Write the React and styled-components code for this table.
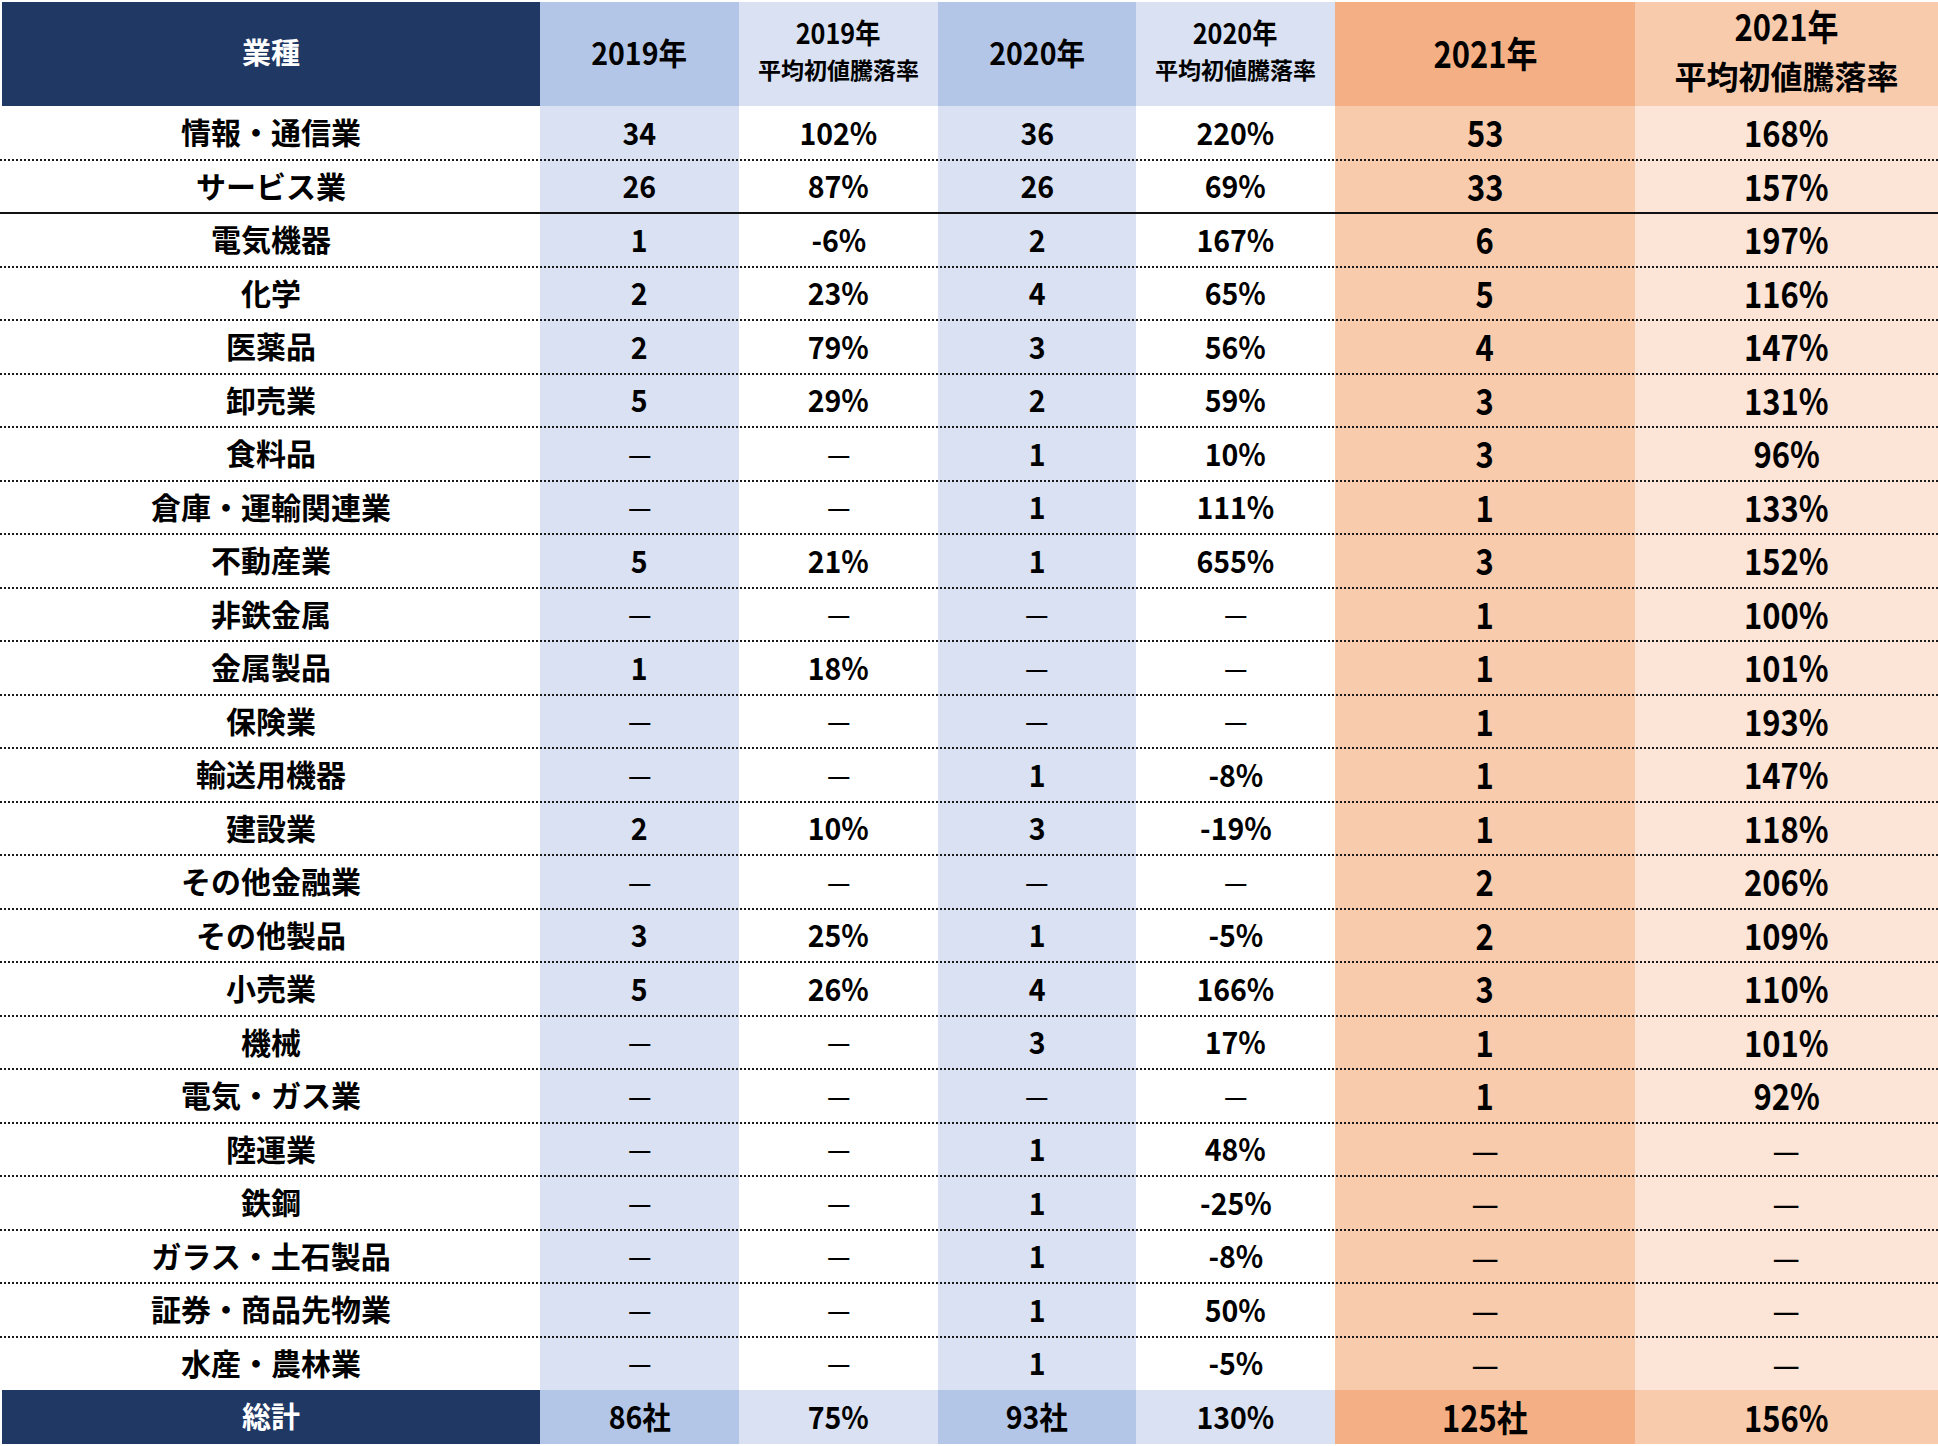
import styled, { createGlobalStyle } from "styled-components";

const GlobalStyle = createGlobalStyle`
  html, body {
    margin: 0;
    padding: 0;
    background: #fff;
  }
  body {
    font-family: "Noto Sans CJK JP", "Noto Sans", sans-serif;
    color: #000;
  }
`;

const COLS = "538px 199px 199px 198px 199px 300px 303px";

const colors = {
  navy: "#203864",
  blue: "#b4c6e7",
  paleBlue: "#d9e1f2",
  white: "#ffffff",
  orange: "#f4b084",
  peach: "#f8cbad",
  palePeach: "#fce4d6",
};

// background per column: header / body (total row reuses header colours)
const headBg = [colors.navy, colors.blue, colors.paleBlue, colors.blue, colors.paleBlue, colors.orange, colors.peach];
const bodyBg = [colors.white, colors.paleBlue, colors.white, colors.paleBlue, colors.white, colors.peach, colors.palePeach];

const Sheet = styled.div`
  padding: 2px 0 0 2px;
  width: 1936px;
`;

const Row = styled.div`
  display: grid;
  grid-template-columns: ${COLS};
  height: ${(p) => p.$h}px;
  position: relative;

  &::after {
    content: "";
    display: ${(p) => (p.$line ? "block" : "none")};
    position: absolute;
    left: -2px;
    right: 0;
    bottom: -1px;
    height: 0;
    border-top: ${(p) =>
      p.$line === "solid" ? "2px solid #111" : "2px dotted #1a1a1a"};
    z-index: 1;
  }
`;

const Cell = styled.div`
  display: flex;
  align-items: center;
  justify-content: center;
  background: ${(p) => p.$bg};
  font-weight: 700;
  font-size: ${(p) => p.$size || 30}px;
  line-height: 1;
  color: ${(p) => (p.$light ? "#fff" : "#000")};
  white-space: nowrap;
  padding-bottom: 3px;
  box-sizing: border-box;
`;

const HeadCell = styled(Cell)`
  flex-direction: column;
  line-height: 1.3;
  text-align: center;
  padding-bottom: 4px;
`;

const HeadLine = styled.span`
  display: block;
  font-size: ${(p) => p.$size}px;
  transform: scaleX(${(p) => p.$sx || 1});
  margin: ${(p) => p.$gap || 0}px 0;
`;

const Val = styled.span`
  display: inline-block;
  transform: scaleX(${(p) => p.$sx});
`;

const Dash = styled.span`
  display: inline-block;
  font-weight: 400;
  transform: scaleX(0.85);
`;

const D = "—";

const rows = [
  ["情報・通信業", "34", "102%", "36", "220%", "53", "168%"],
  ["サービス業", "26", "87%", "26", "69%", "33", "157%"],
  ["電気機器", "1", "-6%", "2", "167%", "6", "197%"],
  ["化学", "2", "23%", "4", "65%", "5", "116%"],
  ["医薬品", "2", "79%", "3", "56%", "4", "147%"],
  ["卸売業", "5", "29%", "2", "59%", "3", "131%"],
  ["食料品", D, D, "1", "10%", "3", "96%"],
  ["倉庫・運輸関連業", D, D, "1", "111%", "1", "133%"],
  ["不動産業", "5", "21%", "1", "655%", "3", "152%"],
  ["非鉄金属", D, D, D, D, "1", "100%"],
  ["金属製品", "1", "18%", D, D, "1", "101%"],
  ["保険業", D, D, D, D, "1", "193%"],
  ["輸送用機器", D, D, "1", "-8%", "1", "147%"],
  ["建設業", "2", "10%", "3", "-19%", "1", "118%"],
  ["その他金融業", D, D, D, D, "2", "206%"],
  ["その他製品", "3", "25%", "1", "-5%", "2", "109%"],
  ["小売業", "5", "26%", "4", "166%", "3", "110%"],
  ["機械", D, D, "3", "17%", "1", "101%"],
  ["電気・ガス業", D, D, D, D, "1", "92%"],
  ["陸運業", D, D, "1", "48%", D, D],
  ["鉄鋼", D, D, "1", "-25%", D, D],
  ["ガラス・土石製品", D, D, "1", "-8%", D, D],
  ["証券・商品先物業", D, D, "1", "50%", D, D],
  ["水産・農林業", D, D, "1", "-5%", D, D],
];

const total = ["総計", "86社", "75%", "93社", "130%", "125社", "156%"];

const valSize = (i) => (i >= 5 ? 36 : 31);
const valScale = (i) => (i >= 5 ? 0.86 : 0.92);

const App = () => {
  return (
    <>
      <GlobalStyle />
      <Sheet>
        <Row $h={104}>
          <HeadCell $bg={headBg[0]} $light $size={29}>
            業種
          </HeadCell>
          <HeadCell $bg={headBg[1]}>
            <HeadLine $size={31} $sx={0.92}>2019年</HeadLine>
          </HeadCell>
          <HeadCell $bg={headBg[2]}>
            <HeadLine $size={28} $sx={0.9}>2019年</HeadLine>
            <HeadLine $size={23} $gap={5}>平均初値騰落率</HeadLine>
          </HeadCell>
          <HeadCell $bg={headBg[3]}>
            <HeadLine $size={31} $sx={0.92}>2020年</HeadLine>
          </HeadCell>
          <HeadCell $bg={headBg[4]}>
            <HeadLine $size={28} $sx={0.9}>2020年</HeadLine>
            <HeadLine $size={23} $gap={5}>平均初値騰落率</HeadLine>
          </HeadCell>
          <HeadCell $bg={headBg[5]}>
            <HeadLine $size={36} $sx={0.86}>2021年</HeadLine>
          </HeadCell>
          <HeadCell $bg={headBg[6]}>
            <HeadLine $size={36} $sx={0.86}>2021年</HeadLine>
            <HeadLine $size={32} $gap={6}>平均初値騰落率</HeadLine>
          </HeadCell>
        </Row>

        {rows.map((r, ri) => {
          const line = ri === 1 ? "solid" : ri === rows.length - 1 ? null : "dotted";
          return (
            <Row key={r[0]} $h={53.5} $line={line}>
              {r.map((v, i) =>
                i === 0 ? (
                  <Cell key={i} $bg={bodyBg[0]} $size={30}>
                    {v}
                  </Cell>
                ) : (
                  <Cell key={i} $bg={bodyBg[i]} $size={valSize(i)}>
                    {v === D ? <Dash>{D}</Dash> : <Val $sx={valScale(i)}>{v}</Val>}
                  </Cell>
                )
              )}
            </Row>
          );
        })}

        <Row $h={54}>
          {total.map((v, i) =>
            i === 0 ? (
              <Cell key={i} $bg={headBg[0]} $light $size={29}>
                {v}
              </Cell>
            ) : (
              <Cell key={i} $bg={headBg[i]} $size={valSize(i)}>
                <Val $sx={valScale(i)}>{v}</Val>
              </Cell>
            )
          )}
        </Row>
      </Sheet>
    </>
  );
};

export default App;
